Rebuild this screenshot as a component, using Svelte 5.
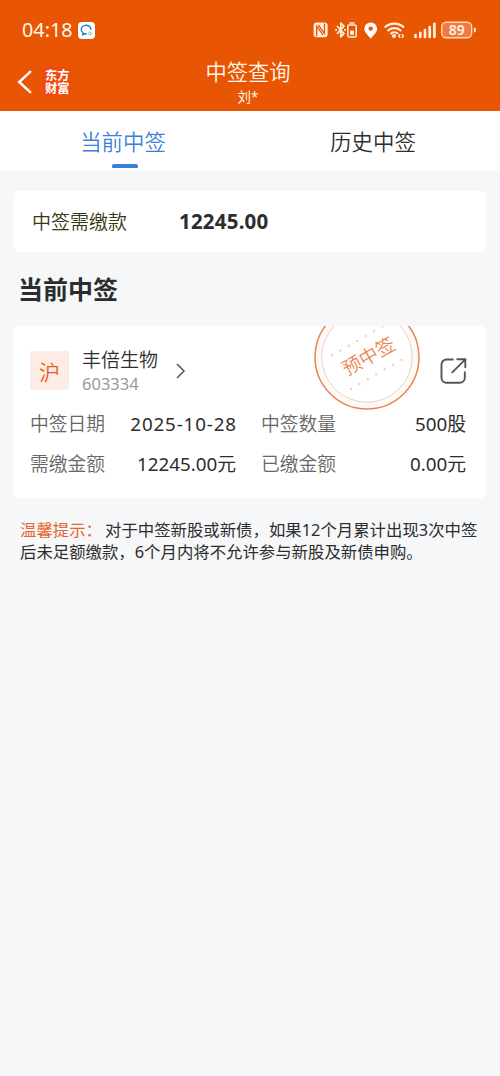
<!--
  Lottery result page: app header, current/history tabs, amount due,
  the list of current allotments and the payment reminder.
-->
<script lang="ts">
  interface Allotment {
    market: string
    name: string
    code: string
    status: string
    fields: { label: string; value: string; wide?: boolean }[]
  }

  const tabs = [
    { id: 'current', label: '当前中签' },
    { id: 'history', label: '历史中签' },
  ]

  const items: Allotment[] = [
    {
      market: '沪',
      name: '丰倍生物',
      code: '603334',
      status: '预中签',
      fields: [
        { label: '中签日期', value: '2025-10-28', wide: true },
        { label: '中签数量', value: '500股' },
        { label: '需缴金额', value: '12245.00元' },
        { label: '已缴金额', value: '0.00元' },
      ],
    },
  ]

  let active = $state('current')
</script>

<div class="page">
  <header>
    <div class="status">
      <span class="time">04:18</span>
      <svg class="chat" width="17" height="17" viewBox="0 0 17 17" fill="none">
        <rect width="17" height="17" rx="4" fill="#fff" />
        <path d="M13 7.8A4.9 4.2 0 1 0 5 10.8l-.5 2 2.3-1.1 2.2.2" stroke="#1683bd" stroke-width="1.4" stroke-linejoin="round" />
        <path d="M12 9.2l2.3 2.2-2.3 2.2-2.2-2.2z" fill="#6cbf9a" />
        <path d="M11.9 10.4v2.1M10.9 11.4h2.1" stroke="#fff" stroke-width=".8" />
      </svg>
      <svg class="signals" width="166" height="20" viewBox="0 0 166 20" fill="none" stroke="#fff3df">
        <rect x="0.6" y="2.6" width="14" height="14.6" rx="3" fill="#fff3df" stroke="none" />
        <path d="M3.7 16.2V6.2l6.2 8.6M11.5 3.6v10L5.3 5" stroke="#e85503" stroke-width="1.3" />
        <g>
          <path d="M24 6l7 7.6-3.2 3.2V3l3.2 3.2-7 7.6" stroke-width="1.7" stroke-linejoin="round" />
          <path d="M22.2 9.9h1.8M31 9.9h1.8" stroke-width="1.8" />
        </g>
        <g stroke-width="1.5">
          <rect x="34.8" y="5" width="8.4" height="12" rx="1.5" />
          <path d="M36.5 3h5" />
          <path d="M37 10.6h4v4.2h-4z" fill="#fff3df" stroke="none" />
        </g>
        <path d="M57.7 18.4c-2.2-2.4-6.4-5.7-6.4-9.6a6.4 6.4 0 0 1 12.8 0c0 3.9-4.2 7.2-6.4 9.6z" fill="#fff" stroke="none" />
        <circle cx="57.7" cy="8.6" r="2.2" fill="#e85503" stroke="none" />
        <g stroke-width="2.1">
          <path d="M71.7 7.5a14 14 0 0 1 19.3 0M74.5 10.9a9.8 9.8 0 0 1 13.7 0M77.5 13.9a5.5 5.5 0 0 1 7.5-.1" />
          <circle cx="81" cy="16" r="2" fill="#fff3df" stroke="none" />
          <path d="M87.2 14.2l-1.6 1.8 1.6 1.8M88.9 14.2l1.6 1.8-1.6 1.8" stroke-width="1.3" />
        </g>
        <path d="M102.5 15v2M107.3 12.8v4.2M112 10v7M116.7 7v10M121.4 3.8v13.2" stroke-width="2.7" stroke-linecap="round" />
        <rect x="128.7" y="2.2" width="30" height="15.6" rx="4.5" fill="#ef7a47" stroke="#ffd7a9" stroke-width="1.4" />
        <path d="M161.8 7.8v4.4" stroke-width="1.8" />
        <text x="143.7" y="15" text-anchor="middle" class="battery" stroke="none" fill="#fff3df">89</text>
      </svg>
    </div>
    <div class="bar">
      <div class="nav">
        <svg width="16" height="24" viewBox="0 0 16 24" fill="none" stroke="#fff" stroke-width="2.5">
          <path d="M13.2 1.8L2.2 12l11 10.2" stroke-linecap="round" />
        </svg>
        <div class="brand">东方财富</div>
      </div>
      <div class="heading">
        <h1>中签查询</h1>
        <p>刘*</p>
      </div>
    </div>
  </header>

  <div class="tabs" role="tablist">
    {#each tabs as t (t.id)}
      <button
        type="button"
        role="tab"
        class="tab"
        class:active={t.id === active}
        aria-selected={t.id === active}
        onclick={() => (active = t.id)}
      >
        <span>{t.label}</span>
      </button>
    {/each}
  </div>

  <main>
    <section class="card due">
      <span class="due-label">中签需缴款</span>
      <strong>12245.00</strong>
    </section>

    <h2>当前中签</h2>

    {#each items as item (item.code)}
      <section class="card item">
        <svg class="stamp" width="108" height="86" viewBox="313 326 108 86" fill="none">
          <circle cx="367" cy="357" r="49" stroke="#fffaf6" stroke-width="6" />
          <circle cx="367" cy="357" r="52" stroke="#e58654" stroke-width="1.5" />
          <circle cx="367" cy="357" r="45.3" stroke="#e3cfc7" stroke-width="1" />
          <g stroke="#efcbb9" stroke-width="2.3" stroke-linecap="round" stroke-dasharray="0 9.7">
            <path d="M332 355.4l51.5-29.6" />
            <path d="M351 388.9l51.3-29.6" />
          </g>
          <text x="369" y="363" text-anchor="middle" transform="rotate(-29.5 369 357)" fill="#ea8652">{item.status}</text>
        </svg>
        <div class="stock">
          <span class="market">{item.market}</span>
          <div class="names">
            <span class="name">{item.name}</span>
            <span class="code">{item.code}</span>
          </div>
          <svg class="chevron" width="10" height="16" viewBox="0 0 10 16" fill="none" stroke="#555" stroke-width="1.5">
            <path d="M1 1l7 7-7 7" />
          </svg>
          <svg class="share" width="28" height="28" viewBox="0 0 28 28" fill="none" stroke="#555" stroke-width="1.9" stroke-linecap="round">
            <path d="M12.8 2.5H6.5a5 5 0 0 0-5 5v13.3a5 5 0 0 0 5 5h13.3a5 5 0 0 0 5-5v-5.6" />
            <path d="M17.3 2.3h8v8M25 2.6L12.3 15.3" />
          </svg>
        </div>
        <dl>
          {#each item.fields as f (f.label)}
            <div class="field">
              <dt>{f.label}</dt>
              <dd class:wide={f.wide}>{f.value}</dd>
            </div>
          {/each}
        </dl>
      </section>
    {/each}

    <p class="notice">
      <em>温馨提示：</em>对于中签新股或新债，如果12个月累计出现3次中签<br />后未足额缴款，6个月内将不允许参与新股及新债申购。
    </p>
  </main>
</div>

<style>
  :global(body) {
    margin: 0;
    background: #f5f7f9;
  }
  .page {
    min-height: 1076px;
    background: #f5f7f9;
    color: #2d2d2d;
    font-family: "Noto Sans", "Noto Sans CJK SC", sans-serif;
  }
  h1, h2, p, dl, dd {
    margin: 0;
  }
  svg {
    display: block;
    flex: none;
  }
  header {
    height: 111px;
    background: #e85503;
    color: #fff8ed;
  }
  .status {
    display: flex;
    align-items: center;
    height: 60px;
    padding: 0 22px;
    box-sizing: border-box;
  }
  .time {
    width: 56px;
    font-size: 19.8px;
    line-height: 22px;
  }
  .signals {
    margin-left: auto;
    margin-right: -1px;
  }
  .battery {
    font-family: "Noto Sans", sans-serif;
    font-size: 14px;
    font-weight: 600;
  }
  .bar {
    display: grid;
    grid-template-columns: 100px 1fr 100px;
    height: 51px;
  }
  .nav {
    display: flex;
    align-items: center;
    gap: 10px;
    height: 43px;
    padding-left: 17px;
  }
  .brand {
    width: 25px;
    padding: 2px 1px 2px 2px;
    border-radius: 5px;
    background: #f04a10;
    font-family: "Noto Sans CJK SC", sans-serif;
    font-size: 12.3px;
    font-weight: 700;
    line-height: 13px;
    color: #fff;
  }
  .heading {
    text-align: center;
    padding-right: 4px;
  }
  h1 {
    font-size: 21.3px;
    font-weight: 350;
    line-height: 24px;
  }
  .heading p {
    font-size: 13.5px;
    line-height: 26px;
  }
  .tabs {
    display: grid;
    grid-template-columns: 1fr 1fr;
    height: 60px;
    background: #fff;
  }
  .tab {
    display: flex;
    flex-direction: column;
    align-items: center;
    border: none;
    background: transparent;
    padding: 16px 0 0;
    font-family: inherit;
    font-size: 21.4px;
    font-weight: 350;
    line-height: 30px;
    color: #2d2d2d;
    cursor: pointer;
  }
  .tab span {
    margin-right: 4px;
  }
  .tab.active {
    color: #3b7fdc;
  }
  .tab.active::after {
    content: '';
    width: 26px;
    height: 4px;
    margin-top: 7px;
    border-radius: 2px 2px 1px 1px;
    background: #3b7fdc;
  }
  main {
    padding: 20px 14px;
  }
  .card {
    background: #fff;
    border-radius: 5px;
    overflow: hidden;
  }
  .due {
    display: flex;
    align-items: center;
    height: 61px;
    padding-left: 18px;
  }
  .due-label {
    width: 147px;
    padding-bottom: 2px;
    font-size: 19px;
    font-weight: 350;
    color: #35370f;
  }
  .due strong {
    padding-bottom: 1px;
    font-size: 20.5px;
    font-weight: 700;
    letter-spacing: 0.2px;
  }
  h2 {
    padding: 19px 0 18px 4px;
    font-size: 25px;
    font-weight: 700;
    line-height: 37px;
  }
  .item {
    position: relative;
    height: 172px;
    padding: 0 20px 0 16px;
    box-sizing: border-box;
  }
  .stamp {
    position: absolute;
    top: 0;
    left: 299px;
  }
  .stamp text {
    font-size: 19px;
    font-weight: 350;
  }
  .stock {
    display: flex;
    align-items: center;
    height: 78px;
    padding-top: 11px;
    box-sizing: border-box;
  }
  .market {
    display: grid;
    place-items: center;
    width: 39px;
    height: 39px;
    margin-right: 13px;
    border-radius: 2px;
    background: #fdece3;
    color: #e85c1b;
    font-size: 21px;
    font-weight: 350;
  }
  .names {
    display: flex;
    flex-direction: column;
    width: 94px;
  }
  .name {
    font-size: 19px;
    font-weight: 350;
    line-height: 26px;
  }
  .code {
    font-size: 16.5px;
    line-height: 22px;
    color: #999;
  }
  .share {
    margin-left: auto;
    margin-right: -2px;
  }
  dl {
    display: grid;
    grid-template-columns: 206px 205px;
    column-gap: 25px;
  }
  .field {
    display: flex;
    justify-content: space-between;
    font-size: 18.8px;
    line-height: 40px;
    white-space: nowrap;
  }
  dt {
    font-weight: 350;
    color: #666;
  }
  .wide {
    letter-spacing: 0.85px;
    margin-right: -0.85px;
  }
  .notice {
    padding: 21px 0 0 6px;
    font-size: 16.4px;
    line-height: 22px;
    white-space: nowrap;
  }
  .notice em {
    display: inline-block;
    width: 85px;
    font-style: normal;
    color: #e8662d;
  }
</style>
